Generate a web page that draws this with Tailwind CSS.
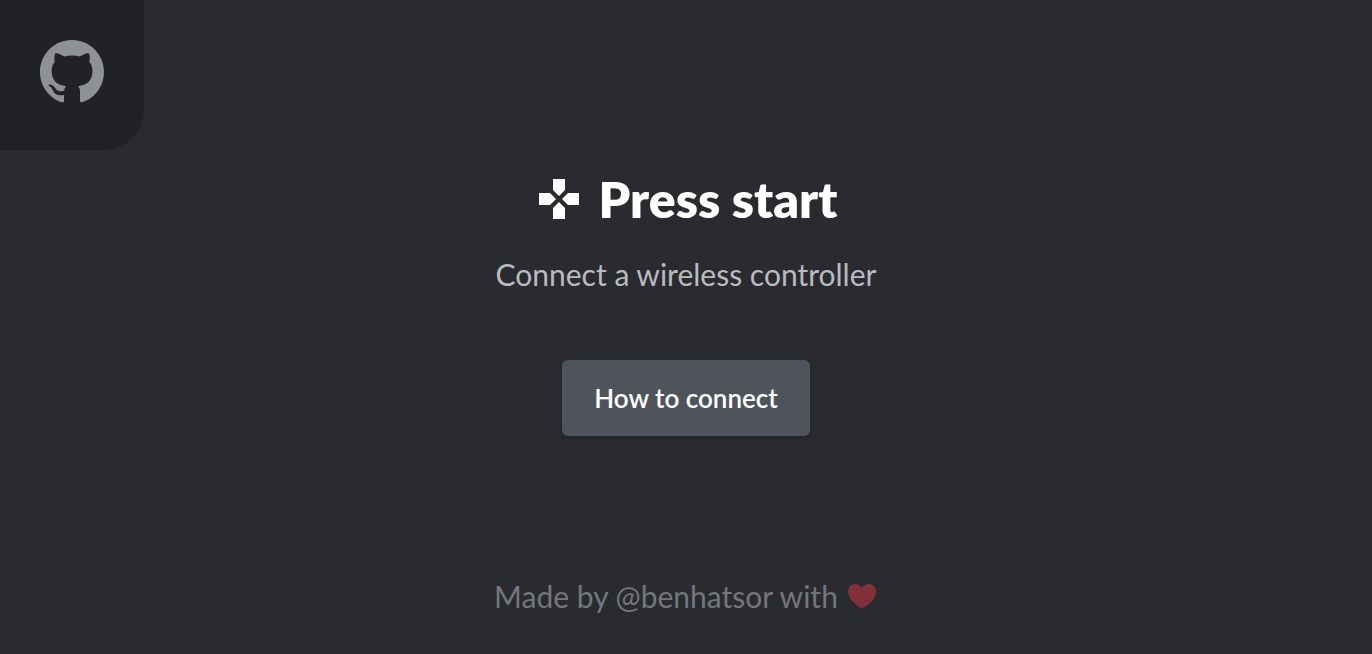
<!DOCTYPE html>
<html lang="en">
<head>
  <meta charset="UTF-8">
  <meta name="viewport" content="width=device-width, initial-scale=1.0">
  <title>Press start</title>
  <script src="https://cdn.jsdelivr.net/npm/@tailwindcss/browser@4"></script>
</head>
<body class="min-h-screen flex flex-col bg-[#292b2f] font-['Lato','Open_Sans',sans-serif]">
  <header class="flex">
    <a href="https://github.com/benhatsor" aria-label="GitHub" class="block px-10 pt-10 pb-[46px] bg-[#202225] rounded-br-[40px] text-[#8e9297]">
      <svg class="size-16" viewBox="0 0 16 16" fill="currentColor" aria-hidden="true">
        <path fill-rule="evenodd" d="M8 0C3.58 0 0 3.58 0 8c0 3.54 2.29 6.53 5.47 7.59.4.07.55-.17.55-.38 0-.19-.01-.82-.01-1.49-2.01.37-2.53-.49-2.69-.94-.09-.23-.48-.94-.82-1.13-.28-.15-.68-.52-.01-.53.63-.01 1.08.58 1.23.82.72 1.21 1.87.87 2.33.66.07-.52.28-.87.51-1.07-1.78-.2-3.64-.89-3.64-3.95 0-.87.31-1.59.82-2.15-.08-.2-.36-1.02.08-2.12 0 0 .67-.21 2.2.82.64-.18 1.32-.27 2-.27s1.36.09 2 .27c1.53-1.04 2.2-.82 2.2-.82.44 1.1.16 1.92.08 2.12.51.56.82 1.27.82 2.15 0 3.07-1.87 3.75-3.65 3.95.29.25.54.73.54 1.48 0 1.07-.01 1.93-.01 2.2 0 .21.15.46.55.38A8.01 8.01 0 0 0 16 8c0-4.42-3.58-8-8-8z"/>
      </svg>
    </a>
  </header>

  <main class="flex flex-col items-center px-4 pt-5 text-center">
    <h1 class="flex items-center gap-4 text-[50px] leading-[58px] font-extrabold text-white">
      <svg class="size-12" viewBox="0 0 24 24" fill="currentColor" aria-hidden="true">
        <path d="M15 7.5V2H9v5.5l3 3 3-3zM7.5 9H2v6h5.5l3-3-3-3zM9 16.5V22h6v-5.5l-3-3-3 3zM16.5 9l-3 3 3 3H22V9h-5.5z"/>
      </svg>
      Press start
    </h1>
    <p class="mt-6 text-[30px] leading-11 text-[#b9bbbe]">Connect a wireless controller</p>
    <button type="button" class="mt-16 h-[76px] px-8 rounded-md bg-[#4f545c] text-[26px] font-semibold text-white shadow-md">How to connect</button>
  </main>

  <footer class="mt-auto flex items-center justify-center gap-2 pb-9 text-[30px] leading-11 text-[#72767d]">
    <p>Made by @benhatsor with</p>
    <svg class="size-8" viewBox="0 0 32 32" fill="#83303a" role="img" aria-label="love">
      <path d="M16 28.5C12 26.5 2 20 2 11.5C2 7 5 4 9 4C12.5 4 15 6 16 8C17 6 19.5 4 23 4C27 4 30 7 30 11.5C30 20 20 26.5 16 28.5Z"/>
    </svg>
  </footer>
</body>
</html>
